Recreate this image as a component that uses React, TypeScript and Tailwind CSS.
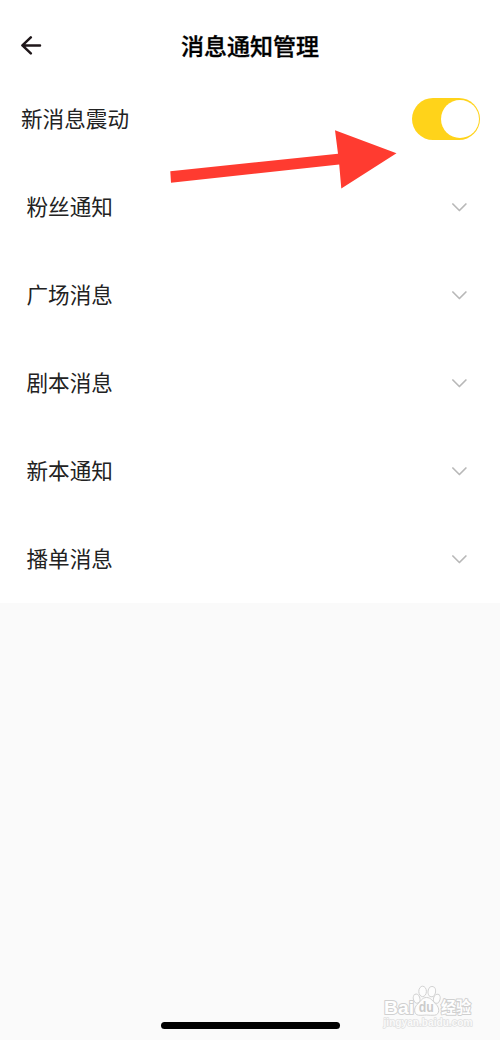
const sections = ['粉丝通知', '广场消息', '剧本消息', '新本通知', '播单消息'];

function BackIcon() {
  return (
    <svg width="22" height="20" viewBox="0 0 22 20" fill="none" stroke="#1f171a" strokeWidth="2.5" strokeLinecap="round" strokeLinejoin="round">
      <path d="M10.8 2.4 L2.4 10.4 L10.8 18.4 M2.8 10.4 H20" />
    </svg>
  );
}

function ChevronDown() {
  return (
    <svg width="16" height="10" viewBox="0 0 16 10" fill="none" stroke="#b8b8b8" strokeWidth="1.7" strokeLinecap="round" strokeLinejoin="round">
      <path d="M1.9 2 L8.4 8.5 L14.9 2" />
    </svg>
  );
}

function Switch() {
  return (
    <button type="button" role="switch" aria-checked="true" className="flex h-[42px] w-[68px] items-center justify-end rounded-full bg-[#ffd31a] pr-[1.5px]">
      <span className="size-[38px] rounded-full bg-white" />
    </button>
  );
}

function PointerArrow() {
  return (
    <svg className="pointer-events-none absolute top-[128px] left-[168px]" width="232" height="64" viewBox="168 128 232 64">
      <path d="M170.3 171.3 L338 153.8 L335 130.3 L396.5 153.3 L341.3 188.5 L339.2 164.6 L171 182.8 Z" fill="#ff3b30" />
    </svg>
  );
}

function Watermark() {
  return (
    <svg className="pointer-events-none absolute top-[980px] left-[378px]" width="100" height="52" viewBox="378 980 100 52">
      <g fill="#fdfdfd" stroke="#d2d2d2" strokeWidth="1">
        <ellipse cx="422.6" cy="991.4" rx="3.8" ry="5.2" />
        <ellipse cx="431.8" cy="991.6" rx="3.8" ry="5.2" transform="rotate(8 431.8 991.6)" />
        <ellipse cx="416.6" cy="998.6" rx="3.3" ry="4.6" transform="rotate(-15 416.6 998.6)" />
        <ellipse cx="436.8" cy="998.8" rx="3.3" ry="4.6" transform="rotate(15 436.8 998.8)" />
        <path d="M426.5 997.5 C422 997.5 420.5 1001.5 417.5 1004.3 C413.5 1007.5 413.5 1014.6 418.5 1015.2 C422 1015.6 424 1015 426.5 1015 C429 1015 432 1015.6 434.7 1015.2 C440 1014.6 439.7 1007.5 436 1004.3 C433 1001.5 431 997.5 426.5 997.5 Z" />
      </g>
      <g fill="#fefefe" stroke="#d0d0d0" strokeWidth="2" strokeLinejoin="round" paintOrder="stroke" className="font-['Liberation_Sans','Noto_Sans_CJK_SC',sans-serif] font-bold">
        <text x="384" y="1013.5" fontSize="19" textLength="30" lengthAdjust="spacingAndGlyphs">Bai</text>
        <text x="441" y="1013" fontSize="16" textLength="30" lengthAdjust="spacingAndGlyphs">经验</text>
        <text x="383.5" y="1026" fontSize="10" fill="#fafafa" strokeWidth="1.4" textLength="89" lengthAdjust="spacingAndGlyphs" stroke="#dfdfdf">jingyan.baidu.com</text>
      </g>
      <text x="418.8" y="1012.3" fontSize="14" fill="#cbcbcb" textLength="15" lengthAdjust="spacingAndGlyphs" className="font-['Liberation_Sans',sans-serif] font-bold">du</text>
    </svg>
  );
}

export default function App() {
  return (
    <div className="relative flex h-[1040px] w-[500px] flex-col overflow-hidden bg-[#fafafa] font-['Noto_Sans_CJK_SC',sans-serif] text-[21.6px] leading-8 text-[#222]">
      <div className="h-[603px] bg-white">
        <header className="grid h-[75px] grid-cols-[60px_1fr_60px] items-center pt-[15px]">
          <button type="button" aria-label="返回" className="pl-5">
            <BackIcon />
          </button>
          <h1 className="pb-px text-center text-[23px] font-medium text-black [-webkit-text-stroke:0.35px_black]">消息通知管理</h1>
        </header>
        <div className="flex h-[88px] items-center justify-between pr-5 pl-[21px]">
          <span className="pb-0.5">新消息震动</span>
          <Switch />
        </div>
        {sections.map((label) => (
          <div key={label} className="flex h-[88px] items-center justify-between pr-[33px] pl-[26.5px]">
            <span className="pb-0.5">{label}</span>
            <ChevronDown />
          </div>
        ))}
      </div>
      <div className="mt-auto mb-[11px] h-[7px] w-[179px] self-center rounded-full bg-black" />
      <PointerArrow />
      <Watermark />
    </div>
  );
}
